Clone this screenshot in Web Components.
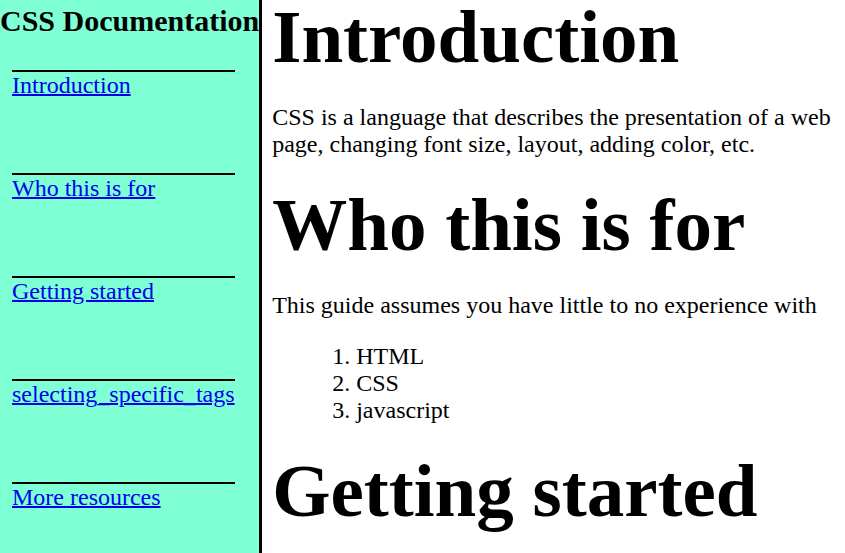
<!DOCTYPE html>
<html lang="en">
<head>
<meta charset="utf-8">
<title>CSS Documentation</title>
<style>
html, body { margin: 0; height: 100%; }
body { font: 24px/27px "Liberation Serif", "Times New Roman", serif; color: #000; background: #fff; }
</style>
</head>
<body>
<doc-layout>
  <doc-nav slot="nav" heading="CSS Documentation">
    <doc-link target="intro">Introduction</doc-link>
    <doc-link target="who">Who this is for</doc-link>
    <doc-link target="start">Getting started</doc-link>
    <doc-link target="tags">selecting_specific_tags</doc-link>
    <doc-link target="more">More resources</doc-link>
  </doc-nav>
  <doc-section id="intro" heading="Introduction">CSS is a language that describes the presentation of a web page, changing font size, layout, adding color, etc.</doc-section>
  <doc-section id="who" heading="Who this is for">This guide assumes you have little to no experience with
    <doc-list slot="extra" items="HTML,CSS,javascript"></doc-list>
  </doc-section>
  <doc-section id="start" heading="Getting started"></doc-section>
</doc-layout>
<script>
class DocElement extends HTMLElement {
  constructor() {
    super();
    this.attachShadow({ mode: "open" });
  }
  connectedCallback() { this.shadowRoot.innerHTML = this.render(); }
}

customElements.define("doc-layout", class extends DocElement {
  render() {
    return `<style>
      :host { display: grid; grid-template-columns: auto minmax(0, 1fr); min-height: 100vh; }
      main { padding: 0 10px; }
    </style><slot name="nav"></slot><main><slot></slot></main>`;
  }
});

customElements.define("doc-nav", class extends DocElement {
  render() {
    return `<style>
      :host { display: block; background: aquamarine; border-right: 3px solid #000; }
      h1 { margin: 0; padding: 4px 0 32px; font-size: 30px; line-height: 34px; white-space: nowrap; }
      nav { display: grid; justify-content: start; row-gap: 75px; padding-left: 12px; }
    </style><h1>${this.getAttribute("heading")}</h1><nav><slot></slot></nav>`;
  }
});

customElements.define("doc-link", class extends DocElement {
  render() {
    return `<style>
      :host { display: block; border-top: 2px solid #000; line-height: 26px; }
      a { color: #00e; text-decoration-thickness: 2px; }
    </style><a href="#${this.getAttribute("target")}"><slot></slot></a>`;
  }
});

customElements.define("doc-section", class extends DocElement {
  render() {
    return `<style>
      :host { display: block; }
      :host(:not(:last-child)) { padding-bottom: 30px; }
      h2 { margin: 0; font-size: 75px; line-height: 74px; }
      div:not(:empty) { padding-top: 30px; }
      :host(:last-child) div { padding: 0; }
    </style><h2>${this.getAttribute("heading")}</h2><div><slot></slot></div><slot name="extra"></slot>`;
  }
});

customElements.define("doc-list", class extends DocElement {
  render() {
    const items = this.getAttribute("items").split(",").map(t => `<li>${t}</li>`).join("");
    return `<style>
      :host { display: block; padding-top: 24px; }
      ol { margin: 0; padding-left: 84px; }
    </style><ol>${items}</ol>`;
  }
});
</script>
</body>
</html>
